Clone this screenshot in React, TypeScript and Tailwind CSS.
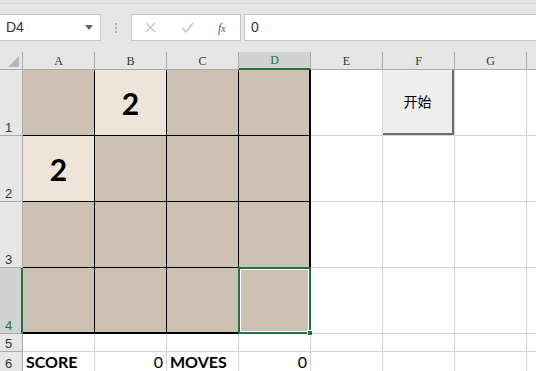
import React from "react";

const cols = ["A", "B", "C", "D", "E", "F", "G", ""];
const board = [
  [0, 2, 0, 0],
  [2, 0, 0, 0],
  [0, 0, 0, 0],
  [0, 0, 0, 0],
];
const rowHeights = ["h-[66px]", "h-[66px]", "h-[66px]", "h-[66px]", "h-[18px]", "h-[20px]"];

function BoardCell({ v, r, c }: { v: number; r: number; c: number }) {
  const right = c === 3 ? "border-r-2" : "border-r";
  const bottom = r === 3 ? "border-b-2" : "border-b";
  const selected = r === 3 && c === 3;
  return (
    <div
      className={`relative flex items-center justify-center border-black ${right} ${bottom} ${
        v ? "bg-[#eee4da]" : "bg-[#cdc1b4]"
      }`}
    >
      {v ? <span className="font-['Lato',sans-serif] text-[30px] font-bold leading-none text-black">{v}</span> : null}
      {selected && (
        <div className="absolute -left-[1px] -top-[1px] -right-[2px] -bottom-[2px] border-2 border-[#217346]">
          <div className="h-full w-full border border-white" />
          <div className="absolute -bottom-[4px] -right-[4px] h-[6px] w-[6px] border border-white bg-[#217346]" />
        </div>
      )}
    </div>
  );
}

export default function App() {
  return (
    <div className="h-[371px] w-[536px] overflow-hidden bg-white font-['Liberation_Sans',sans-serif] text-[13px] text-[#222]">
      {/* formula bar */}
      <div className="h-[52px] bg-[#e6e6e6] pt-[3px]">
        <div className="h-[11px] border-t border-[#d4d4d4]" />
        <div className="flex h-[27px] items-stretch">
          <div className="flex w-[101px] items-center justify-between border border-l-0 border-[#c6c6c6] bg-white pl-[6px] pr-[7px]">
            <span className="text-[14px] text-[#333]">D4</span>
            <svg width="8" height="5" viewBox="0 0 8 5">
              <path d="M0 0 H8 L4 5 Z" fill="#666" />
            </svg>
          </div>
          <div className="flex w-[30px] flex-col items-center justify-center gap-[2px]">
            <span className="h-[2px] w-[2px] bg-[#b0b0b0]" />
            <span className="h-[2px] w-[2px] bg-[#b0b0b0]" />
            <span className="h-[2px] w-[2px] bg-[#b0b0b0]" />
          </div>
          <div className="flex w-[110px] items-center border border-[#c6c6c6] bg-white">
            <svg className="ml-[13px]" width="11" height="11" viewBox="0 0 11 11">
              <path d="M1 1 L10 10 M10 1 L1 10" stroke="#c3c3c3" strokeWidth="1.3" />
            </svg>
            <svg className="ml-[25px]" width="13" height="11" viewBox="0 0 13 11">
              <path d="M1 6 L5 10 L12 1" stroke="#c3c3c3" strokeWidth="1.5" fill="none" />
            </svg>
            <span className="ml-[24px] font-['Liberation_Serif',serif] text-[12px] italic text-[#555]">
              f<span className="text-[10px]">x</span>
            </span>
          </div>
          <div className="ml-[3px] flex flex-1 items-center border border-r-0 border-[#c6c6c6] bg-white pl-[6px]">
            <span className="text-[14px] text-[#333]">0</span>
          </div>
        </div>
      </div>

      {/* sheet */}
      <div className="grid grid-cols-[23px_72px_72px_72px_72px_72px_72px_72px_10px]">
        {/* header row */}
        <div className="relative h-[18px] border-b border-r border-[#ababab] bg-[#e6e6e6]">
          <svg className="absolute bottom-[2px] right-[3px]" width="11" height="11" viewBox="0 0 11 11">
            <path d="M11 0 V11 H0 Z" fill="#b7b7b7" />
          </svg>
        </div>
        {cols.map((c) => {
          const sel = c === "D";
          return (
            <div
              key={c || "h"}
              className={`flex h-[18px] items-end justify-center border-r font-['Liberation_Serif',serif] text-[12px] leading-[15px] ${
                sel
                  ? "border-b-2 border-r-[#ababab] border-b-[#217346] bg-[#d2d2d2] text-[#217346]"
                  : "border-b border-[#ababab] bg-[#e6e6e6] text-[#333]"
              }`}
            >
              {c}
            </div>
          );
        })}

        {rowHeights.map((h, r) => {
          const sel = r === 3;
          return (
            <React.Fragment key={r}>
              <div
                className={`flex ${h} items-end pb-[1px] pl-[5px] text-[13px] leading-none ${
                  sel
                    ? "border-b border-r-2 border-b-[#ababab] border-r-[#217346] bg-[#d2d2d2] text-[#217346]"
                    : "border-b border-r border-[#ababab] bg-[#e6e6e6] text-[#333]"
                }`}
              >
                {r + 1}
              </div>
              {[0, 1, 2, 3, 4, 5, 6, 7].map((c) => {
                if (r < 4 && c < 4) return <BoardCell key={c} v={board[r][c]} r={r} c={c} />;
                if (r === 0 && c === 5)
                  return (
                    <div key={c} className="border-b border-r border-[#d4d4d4]">
                      <button className="flex h-full w-full items-center justify-center border-b-2 border-r-2 border-[#6d6d6d] bg-[#efefef] font-['Noto_Sans_CJK_SC',sans-serif] text-[14px] text-black">
                        开始
                      </button>
                    </div>
                  );
                let content: React.ReactNode = null;
                let align = "";
                if (r === 5) {
                  if (c === 0) content = "SCORE";
                  if (c === 2) content = "MOVES";
                  if (c === 1 || c === 3) {
                    content = <span className="font-normal">0</span>;
                    align = "justify-end pr-[3px]";
                  }
                }
                return (
                  <div
                    key={c}
                    className={`flex items-start overflow-hidden border-b border-r border-[#d4d4d4] pl-[3px] pt-[2px] font-['Lato',sans-serif] text-[16px] font-bold leading-none text-black ${align}`}
                  >
                    {content}
                  </div>
                );
              })}
            </React.Fragment>
          );
        })}
      </div>
    </div>
  );
}
